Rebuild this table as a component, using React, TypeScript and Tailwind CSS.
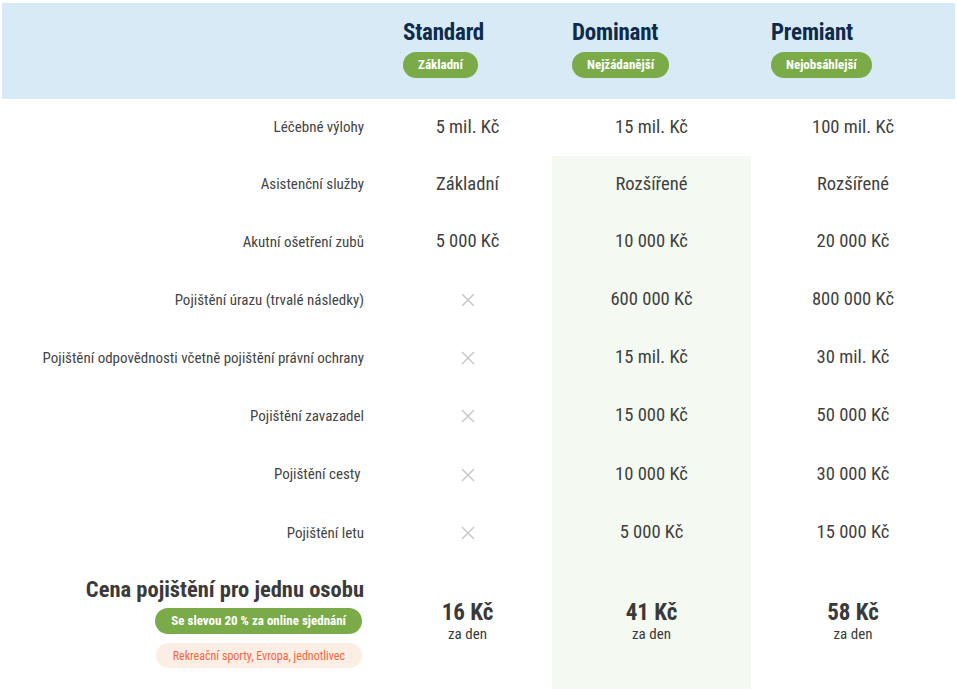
import React from "react";

const font = { fontFamily: '"Roboto Condensed", "Liberation Sans Narrow", "DejaVu Sans Condensed", Roboto, sans-serif' };

type Row = { label: string; v: (string | null)[] };

const rows: Row[] = [
  { label: "Léčebné výlohy", v: ["5 mil. Kč", "15 mil. Kč", "100 mil. Kč"] },
  { label: "Asistenční služby", v: ["Základní", "Rozšířené", "Rozšířené"] },
  { label: "Akutní ošetření zubů", v: ["5 000 Kč", "10 000 Kč", "20 000 Kč"] },
  { label: "Pojištění úrazu (trvalé následky)", v: [null, "600 000 Kč", "800 000 Kč"] },
  { label: "Pojištění odpovědnosti včetně pojištění právní ochrany", v: [null, "15 mil. Kč", "30 mil. Kč"] },
  { label: "Pojištění zavazadel", v: [null, "15 000 Kč", "50 000 Kč"] },
  { label: "Pojištění cesty\u00a0", v: [null, "10 000 Kč", "30 000 Kč"] },
  { label: "Pojištění letu", v: [null, "5 000 Kč", "15 000 Kč"] },
];

const heights = ["h-[57px]", "h-[57px]", "h-[58px]", "h-[58px]", "h-[58px]", "h-[58px]", "h-[59px]", "h-[58px]"];

function Cross() {
  return (
    <svg width="14" height="14" viewBox="0 0 14 14" fill="none" stroke="#c9c9c9" strokeWidth="1.5">
      <path d="M1 1L13 13M13 1L1 13" />
    </svg>
  );
}

const plans = [
  { name: "Standard", tag: "Základní" },
  { name: "Dominant", tag: "Nejžádanější" },
  { name: "Premiant", tag: "Nejobsáhlejší" },
];

const prices = ["16 Kč", "41 Kč", "58 Kč"];

export default function App() {
  return (
    <div className="w-[957px] h-[691px] bg-white pt-[3px] pl-[2px] overflow-hidden" style={font}>
      <div className="w-[953px] grid grid-cols-[381px_169px_199px_204px]">
        {/* header */}
        <div className="h-[96px] bg-[#d7eaf5]" />
        {plans.map((p) => (
          <div key={p.name} className="h-[96px] bg-[#d7eaf5] pl-[20px] pt-[17px] flex flex-col items-start">
            <div className="text-[23px] leading-[26px] font-bold text-[#0e2b4b] tracking-[-0.2px]">{p.name}</div>
            <div className="mt-[6px] h-[26px] px-[15px] rounded-full bg-[#7aab48] text-white text-[13px] font-bold flex items-center">
              {p.tag}
            </div>
          </div>
        ))}

        {/* body rows */}
        {rows.map((r, i) => (
          <React.Fragment key={r.label}>
            <div className={`${heights[i]} flex items-center justify-end pr-[19px] text-[15px] font-normal text-[#444] whitespace-pre`}>
              {r.label}
            </div>
            {r.v.map((val, j) => (
              <div
                key={j}
                className={`${heights[i]} flex items-center justify-center text-[18.6px] font-normal text-[#3f3f3f] ${
                  j === 1 && i > 0 ? "bg-[#f4f9f2]" : ""
                }`}
              >
                {val === null ? <Cross /> : val}
              </div>
            ))}
          </React.Fragment>
        ))}

        {/* price row */}
        <div className="h-[127px] flex flex-col items-end pr-[21px] pt-[14px]">
          <div className="text-[22.5px] leading-[27px] font-bold text-[#3a3a3a] mr-[-2px]">Cena pojištění pro jednu osobu</div>
          <div className="mt-[5px] h-[26px] px-[16px] rounded-full bg-[#7aab48] text-white text-[13px] font-bold flex items-center">
            Se slevou 20 % za online sjednání
          </div>
          <div className="mt-[9px] h-[25px] px-[17px] rounded-full bg-[#fdeee5] text-[#f2673f] text-[12px] flex items-center">
            Rekreační sporty, Evropa, jednotlivec
          </div>
        </div>
        {prices.map((p, j) => (
          <div key={p} className={`h-[127px] flex flex-col items-center pt-[39px] ${j === 1 ? "bg-[#f4f9f2]" : ""}`}>
            <div className="text-[23px] leading-[24px] font-bold text-[#3a3a3a]">{p}</div>
            <div className="text-[15px] leading-[18px] text-[#3a3a3a]">za den</div>
          </div>
        ))}
      </div>
    </div>
  );
}
